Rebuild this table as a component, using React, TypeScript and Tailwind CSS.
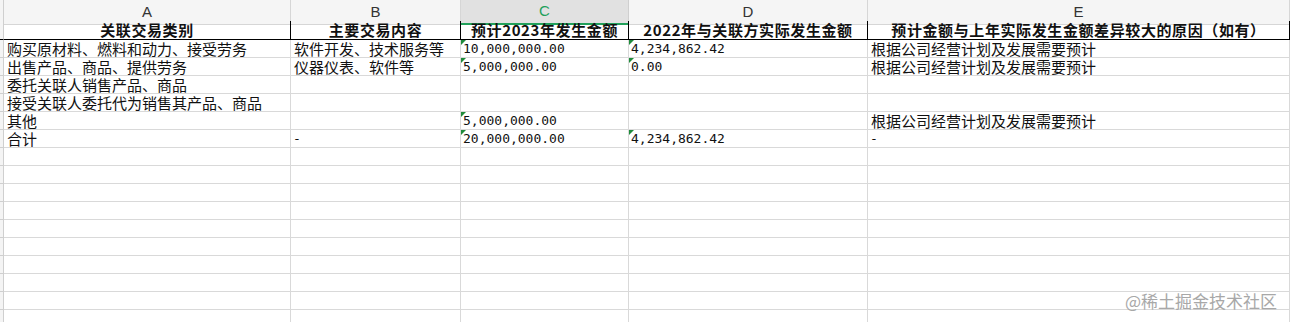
import React from 'react';

const cjk = '"Noto Sans CJK SC", "Noto Sans", sans-serif';
const mono = '"DejaVu Sans Mono", "Noto Sans CJK SC", monospace';

type Cell = { text: string; num?: boolean; flag?: boolean };

const header = [
  '关联交易类别',
  '主要交易内容',
  '预计2023年发生金额',
  '2022年与关联方实际发生金额',
  '预计金额与上年实际发生金额差异较大的原因（如有）',
];

const reason = '根据公司经营计划及发展需要预计';

const rows: Cell[][] = [
  [
    { text: '购买原材料、燃料和动力、接受劳务' },
    { text: '软件开发、技术服务等' },
    { text: '10,000,000.00', num: true, flag: true },
    { text: '4,234,862.42', num: true, flag: true },
    { text: reason },
  ],
  [
    { text: '出售产品、商品、提供劳务' },
    { text: '仪器仪表、软件等' },
    { text: '5,000,000.00', num: true, flag: true },
    { text: '0.00', num: true, flag: true },
    { text: reason },
  ],
  [{ text: '委托关联人销售产品、商品' }, { text: '' }, { text: '' }, { text: '' }, { text: '' }],
  [{ text: '接受关联人委托代为销售其产品、商品' }, { text: '' }, { text: '' }, { text: '' }, { text: '' }],
  [
    { text: '其他' },
    { text: '' },
    { text: '5,000,000.00', num: true, flag: true },
    { text: '' },
    { text: reason },
  ],
  [
    { text: '合计' },
    { text: '-', num: true },
    { text: '20,000,000.00', num: true, flag: true },
    { text: '4,234,862.42', num: true, flag: true },
    { text: '-', num: true },
  ],
];

const emptyRows = 10;
const cols = 'grid grid-cols-[4px_287px_170px_168px_239px_1fr]';

function Flag() {
  return (
    <span className="absolute left-0 top-0 h-0 w-0 border-t-[5px] border-r-[5px] border-t-[#1f8b3b] border-r-transparent" />
  );
}

export default function App() {
  return (
    <div className="relative h-[322px] w-[1290px] overflow-hidden bg-white text-[#111]">
      {/* column letters */}
      <div className={`${cols} h-[21px] text-[15px] text-[#333]`} style={{ fontFamily: '"Liberation Sans", "Noto Sans", sans-serif' }}>
        <div className="border-r border-b border-[#cfcfcf] bg-[#f4f4f4]" />
        {['A', 'B', 'C', 'D', 'E'].map((l) =>
          l === 'C' ? (
            <div key={l} className="flex items-center justify-center border-r border-r-[#cfcfcf] border-b-2 border-b-[#21a05a] bg-[#e1e1e1] text-[#21a05a]">
              {l}
            </div>
          ) : (
            <div key={l} className="flex items-center justify-center border-r border-b border-[#d6d6d6] bg-[#f5f5f5]">
              {l}
            </div>
          )
        )}
      </div>

      {/* header row */}
      <div className={`${cols} h-[19px] text-[15px] font-bold tracking-[0.6px]`} style={{ fontFamily: cjk }}>
        <div className="border-r border-b border-r-[#cfcfcf] border-b-black bg-[#f4f4f4]" />
        {header.map((h) => (
          <div key={h} className="flex items-center justify-center whitespace-nowrap border-r border-b border-black leading-[16px]">
            {h}
          </div>
        ))}
      </div>

      {/* data rows */}
      {rows.map((r, i) => (
        <div key={i} className={`${cols} h-[18px]`}>
          <div className="border-r border-b border-[#cfcfcf] bg-[#f4f4f4]" />
          {r.map((c, j) => (
            <div
              key={j}
              className={`relative flex items-center whitespace-nowrap border-r border-b border-[#d9d9d9] ${c.num ? 'pl-[2px] text-[13px]' : 'pl-[3px] text-[15px]'} leading-[16px]`}
              style={{ fontFamily: c.num ? mono : cjk }}
            >
              {c.flag && <Flag />}
              {c.text}
            </div>
          ))}
        </div>
      ))}

      {Array.from({ length: emptyRows }).map((_, i) => (
        <div key={`e${i}`} className={`${cols} h-[18px]`}>
          <div className="border-r border-b border-[#cfcfcf] bg-[#f4f4f4]" />
          {[0, 1, 2, 3, 4].map((j) => (
            <div key={j} className="border-r border-b border-[#d9d9d9]" />
          ))}
        </div>
      ))}

      <div
        className="absolute right-[13px] top-[288px] text-[17px] text-[#a8a8a8]"
        style={{ fontFamily: cjk }}
      >
        @稀土掘金技术社区
      </div>
    </div>
  );
}
